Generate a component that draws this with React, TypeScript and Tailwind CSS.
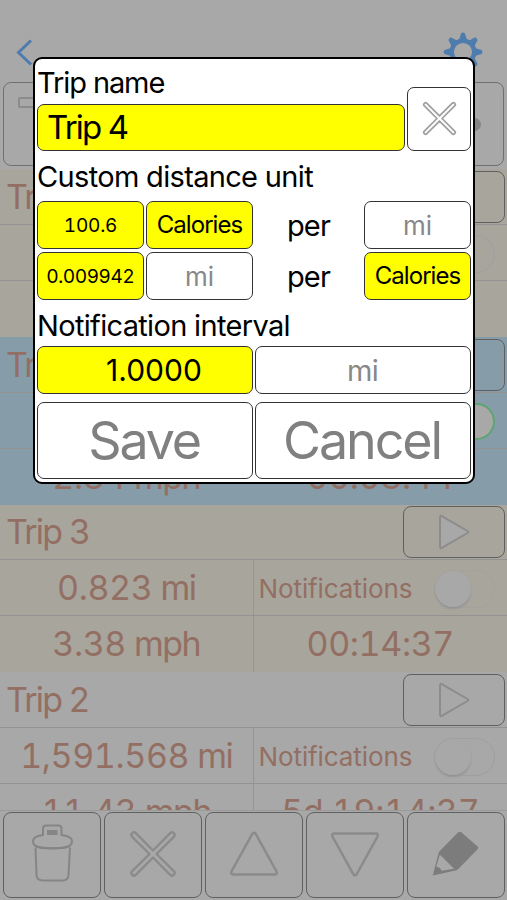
import React from 'react';

interface Trip {
  name: string;
  distance: string;
  speed: string;
  time: string;
  background: string;
  enabled?: boolean;
  filledIcons?: boolean;
}

const trips: Trip[] = [
  { name: 'Trip 5', distance: '', speed: '', time: '', background: 'bg-[#a8a59c]' },
  { name: 'Trip 4', distance: '', speed: '2.84 mph', time: '00:08:44', background: 'bg-[#879ca9]', enabled: true },
  { name: 'Trip 3', distance: '0.823 mi', speed: '3.38 mph', time: '00:14:37', background: 'bg-[#a8a59c]', filledIcons: true },
  { name: 'Trip 2', distance: '1,591.568 mi', speed: '11.43 mph', time: '5d 19:14:37', background: 'bg-[#a8a8a8]' },
];

const CrossIcon = ({ className }: { className: string }) => (
  <svg viewBox="0 0 48 48" className={className} fill="none" stroke="currentColor" strokeWidth="2.4" strokeLinejoin="round">
    <path d="M24 20.500 41.200 3.200a2.500 2.500 0 0 1 3.600 3.600L27.500 24l17.300 17.200a2.500 2.500 0 0 1-3.600 3.600L24 27.500 6.800 44.800a2.500 2.500 0 0 1-3.600-3.600L20.500 24 3.200 6.800a2.500 2.500 0 0 1 3.600-3.600Z" />
  </svg>
);

const TrashIcon = () => (
  <svg viewBox="0 0 44 60" className="h-[60px] w-[44px]" fill="none" stroke="#858585" strokeWidth="2">
    <path d="M13 11V4.500q0-3 3-3h12.500q3 0 3 3V11q10.500 1.500 10.500 6 0 5.500-7 6.500-12.500 1.600-25 0Q3 22.500 3 17q0-4.500 10-6Z" />
    <path d="M18 7h8.500v3H18Z" fill="#858585" />
    <path d="M5.500 21.800q3 2.600 17 2.600t17-2.600" />
    <path d="m5.500 23.500 1 27.500q.3 5.500 6.500 5.500h19.500q5.700 0 6-5.500l1.500-27.500" />
  </svg>
);

const PencilIcon = () => (
  <svg viewBox="0 0 48 48" className="h-[48px] w-[48px]">
    <path d="M.8 45.500 6.600 23Q7 21.800 8 20.800L26 2.600q1.800-1.600 3.600 0L45.600 16.600q1.400 1.300 0 2.700L26 39.200q-1 1-2.500 1.400Z" fill="#7c7c7c" />
    <path d="M7.800 24.500 22 38.800 9.500 40.700q-1-3.500-5.200-4Z" fill="#a8a8a8" />
  </svg>
);

const GearIcon = () => (
  <svg viewBox="-20 -20 40 40" className="h-10 w-10" fill="#4e7cad">
    {[0, 45, 90, 135, 180, 225, 270, 315].map((angle) => (
      <path key={angle} d="M-4-12-2-18.500q2-1.800 4 0L4-12Z" transform={`rotate(${angle})`} />
    ))}
    <circle r="11.300" fill="none" stroke="#4e7cad" strokeWidth="4.400" />
  </svg>
);

const Switch = ({ on, filled }: { on?: boolean; filled?: boolean }) => {
  if (on) {
    return (
      <div className="flex h-[37px] w-[61px] justify-end rounded-full border-2 border-[#5fa473] bg-[#5fa473]">
        <div className="h-[33px] w-[33px] rounded-full bg-[#a8a8a8]" />
      </div>
    );
  }
  return (
    <div className={`flex h-[38px] w-[61px] rounded-full border ${filled ? 'border-[#a4a29b]' : 'border-[#9f9f9f]'}`}>
      <div className="h-[36px] w-[36px] rounded-full bg-[#a8a8a8] shadow-[0_2px_2px_#949494]" />
    </div>
  );
};

// Digits are set wider than the unit that follows them
const Measure = ({ value }: { value: string }) => {
  const [amount, unit] = value.split(' ');
  return (
    <span className="whitespace-nowrap">
      <span className="tracking-[-0.4px] tabular-nums">{amount}</span>
      <span className="tracking-[-1.5px]"> {unit}</span>
    </span>
  );
};

const TripRow = ({ trip }: { trip: Trip }) => (
  <div className={`grid h-[167.75px] shrink-0 grid-rows-3 text-[#936f63] ${trip.background}`}>
    <div className="flex items-center justify-between border-b border-[#929292] pl-[6px] pr-[2px] pt-px">
      <span className="text-[34px] tracking-[-1.8px]">{trip.name}</span>
      <div className="flex h-[52px] w-[102px] items-center justify-center rounded-lg border border-[#606060]">
        <svg viewBox="0 0 32 36" className="h-9 w-8">
          <path d="M2 3.500Q2 1 4.200 2.300L29.500 17q1.500 1 0 2L4.200 33.700Q2 35 2 32.500Z" fill={trip.filledIcons ? '#a8a8a8' : 'none'} stroke="#8c8c8c" strokeWidth="2" />
        </svg>
      </div>
    </div>
    <div className="grid grid-cols-2 border-b border-[#929292]">
      <div className="flex items-center justify-center border-r border-[#959595] pt-px text-[34px]">
        {trip.distance && <Measure value={trip.distance} />}
      </div>
      <div className="flex items-center justify-between pl-[5px] pr-[12px] pt-[3px]">
        <span className="text-[26px] tracking-[-0.1px]">Notifications</span>
        <Switch on={trip.enabled} filled={trip.filledIcons} />
      </div>
    </div>
    <div className="grid grid-cols-2 text-[34px]">
      <div className="flex items-center justify-center border-r border-[#959595]">
        {trip.speed && <Measure value={trip.speed} />}
      </div>
      <div className="flex items-center justify-center">
        <span className="tracking-[-0.4px] tabular-nums">{trip.time}</span>
      </div>
    </div>
  </div>
);

const Field = ({ className, children }: { className: string; children: React.ReactNode }) => (
  <div className={`flex shrink-0 items-center rounded-[7px] border border-[#333] ${className}`}>{children}</div>
);

const TripDialog = () => (
  <div className="absolute left-[33px] top-[57px] flex h-[427px] w-[442px] flex-col rounded-[9px] border-2 border-black bg-white px-[2px] text-black">
    <div className="flex h-[92px] shrink-0 items-end justify-between">
      <div className="flex h-full flex-col justify-between">
        <div className="flex h-[45px] items-center pt-[2px] text-[29px]">
          <span className="tracking-[-1.1px]">Trip name</span>
        </div>
        <Field className="h-[47px] w-[368px] bg-[#ff0] pl-[9px] text-[33px]">
          <span className="tracking-[-1.8px]">Trip 4</span>
        </Field>
      </div>
      <Field className="h-[64px] w-[64px] justify-center pb-px text-[#a0a0a0]">
        <CrossIcon className="h-[35px] w-[35px]" />
      </Field>
    </div>
    <div className="flex h-[50px] shrink-0 items-center pt-px text-[29px]">
      <span className="tracking-[-0.67px]">Custom distance unit</span>
    </div>
    <div className="flex flex-col gap-[3px]">
      <div className="flex gap-[2px]">
        <Field className="h-[48px] w-[107px] justify-center bg-[#ff0] text-[19px] tabular-nums tracking-[-0.2px]">100.6</Field>
        <Field className="h-[48px] w-[107px] justify-center bg-[#ff0] text-[24px]">
          <span className="tracking-[-0.95px]">Calories</span>
        </Field>
        <div className="flex grow items-center justify-center text-[29px] tracking-[-0.8px]">per</div>
        <Field className="h-[48px] w-[107px] justify-center pt-[2px] text-[26px] text-[#888]">mi</Field>
      </div>
      <div className="flex gap-[2px]">
        <Field className="h-[48px] w-[107px] justify-center bg-[#ff0] text-[19px]">0.009942</Field>
        <Field className="h-[48px] w-[107px] justify-center pt-[2px] text-[26px] text-[#888]">mi</Field>
        <div className="flex grow items-center justify-center text-[29px] tracking-[-0.8px]">per</div>
        <Field className="h-[48px] w-[107px] justify-center bg-[#ff0] text-[24px]">
          <span className="tracking-[-0.95px]">Calories</span>
        </Field>
      </div>
    </div>
    <div className="flex h-[46px] shrink-0 items-center pt-[4px] text-[29px]">
      <span className="tracking-[-0.67px]">Notification interval</span>
    </div>
    <div className="flex gap-[2px]">
      <Field className="h-[48px] w-[216px] justify-center bg-[#ff0] pl-[18px] text-[30px]">1.0000</Field>
      <Field className="h-[48px] w-[216px] justify-center pr-px text-[29px] tracking-[-0.8px] text-[#888]">mi</Field>
    </div>
    <div className="mt-2 flex gap-[2px] text-[52px] text-[#808080]">
      <Field className="h-[77px] w-[216px] justify-center pr-[2px]">
        <span className="tracking-[-2.2px]">Save</span>
      </Field>
      <Field className="h-[77px] w-[216px] justify-center pr-[2px]">
        <span className="tracking-[-2.1px]">Cancel</span>
      </Field>
    </div>
  </div>
);

const toolButton = 'flex items-center justify-center rounded-lg border border-[#606060] pb-[2px]';

const App: React.FC = () => {
  return (
    <div className="relative flex h-[900px] w-[507px] flex-col overflow-hidden bg-[#a8a8a8] font-['Inter',sans-serif] leading-none">
      {/* Navigation bar */}
      <div className="flex h-[82px] shrink-0 items-start justify-between pl-[16px] pr-[24px] pt-[32px]">
        <svg viewBox="0 0 17 27" className="mt-[7px] h-[27px] w-[17px]" fill="none" stroke="#4e7cad" strokeWidth="3">
          <path d="M15 1.500 2.500 13.500 15 25.500" />
        </svg>
        <GearIcon />
      </div>

      {/* Recording controls */}
      <div className="flex h-[87px] shrink-0 justify-between px-[3px]">
        <div className="h-[84px] w-[98px] rounded-lg border border-[#707070] pl-[14px] pt-[14px]">
          <div className="h-[11px] w-[60px] rounded-[2px] border-2 border-[#8b8b8b]" />
        </div>
        <div className="flex h-[84px] w-[98px] items-center justify-end rounded-lg border border-[#707070] pr-[22px]">
          <div className="h-[13px] w-[20px] rounded-full bg-[#858585]" />
        </div>
      </div>

      {/* Trips */}
      <div className="flex h-[642px] shrink-0 flex-col overflow-hidden border-b border-[#9a9a9a]">
        {trips.map((trip) => (
          <TripRow key={trip.name} trip={trip} />
        ))}
      </div>

      {/* Toolbar */}
      <div className="grid h-[87px] shrink-0 grid-cols-5 gap-[3px] pl-[3px] pr-[2px] pt-px text-[#8b8b8b]">
        <div className={toolButton}><TrashIcon /></div>
        <div className={toolButton}><CrossIcon className="h-[48px] w-[48px]" /></div>
        <div className={toolButton}>
          <svg viewBox="0 0 50 46" className="h-[46px] w-[50px]" fill="none" stroke="currentColor" strokeWidth="2.5">
            <path d="M23.500 2.500q1.500-1.500 3 0L47.500 40.500q1 3-1.500 3H4q-2.500 0-1.500-3Z" />
          </svg>
        </div>
        <div className={toolButton}>
          <svg viewBox="0 0 50 46" className="h-[46px] w-[50px]" fill="none" stroke="currentColor" strokeWidth="2.5">
            <path d="M23.500 43.500q1.500 1.500 3 0L47.500 5.500q1-3-1.500-3H4q-2.500 0-1.500 3Z" />
          </svg>
        </div>
        <div className={toolButton}><PencilIcon /></div>
      </div>

      <TripDialog />
    </div>
  );
};

export default App;
